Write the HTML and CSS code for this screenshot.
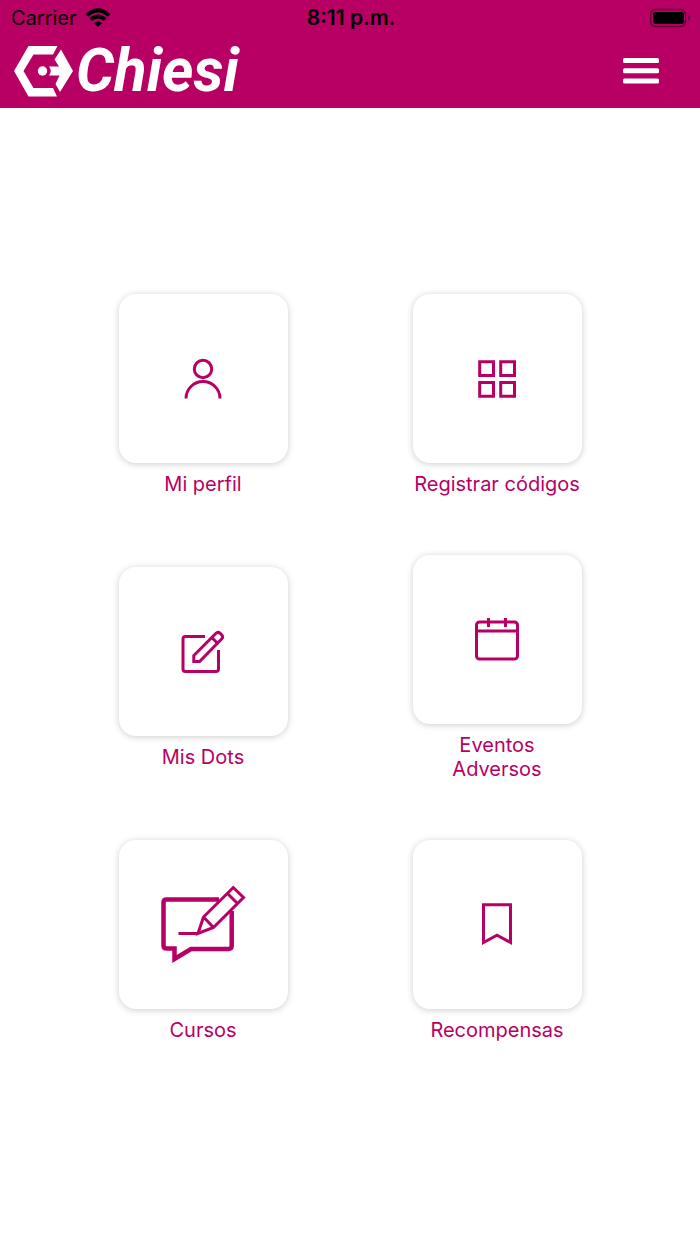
FILE: index.html
```html
<!DOCTYPE html>
<html lang="es">
<head>
<meta charset="utf-8">
<meta name="viewport" content="width=device-width, initial-scale=1">
<title>Chiesi</title>
<link rel="stylesheet" href="styles.css">
</head>
<body>
<header class="header">
  <div class="status">
    <div class="status-left">
      <span>Carrier</span>
      <svg width="26" height="20" viewBox="0 0 26 20" aria-hidden="true">
        <path d="M1.800 7.300Q13-2.700 24.200 7.300" fill="none" stroke="#000" stroke-width="4"/>
        <path d="M5.800 11.600Q13 5.200 20.200 11.600" fill="none" stroke="#000" stroke-width="3.800"/>
        <path d="M13 19L9 15.200Q13 11.800 17 15.200Z"/>
      </svg>
    </div>
    <time class="clock">8:11 p.m.</time>
    <div class="status-right">
      <svg width="42" height="20" viewBox="0 0 42 20" aria-hidden="true">
        <rect x="1.500" y="1.500" width="35" height="17" rx="5" fill="none" stroke="#000" stroke-opacity=".45" stroke-width="1.500"/>
        <rect x="4" y="4" width="31" height="12" rx="2.500"/>
        <path d="M39 7q2 1 2 3t-2 3z" opacity=".45"/>
      </svg>
    </div>
  </div>
  <nav class="nav">
    <a class="brand" href="#">
      <svg width="60" height="52" viewBox="14 45 60 52" fill="#fff" aria-hidden="true">
        <path d="M14 71L28.500 46H57.500L53 54.500H33.500L23.500 71L33.500 88H53L57 96.500H28.500Z"/>
        <path d="M61 49.500L73 71L60 92L55.500 84L59.500 75.500H49Q52.500 71 49 66.500H59L54.500 59.500Z"/>
        <circle cx="42.500" cy="71" r="4.700"/>
      </svg>
      <span>Chiesi</span>
    </a>
    <button class="menu" type="button" aria-label="Menú">
      <svg width="36" height="26" viewBox="0 0 36 26" fill="#fff" aria-hidden="true">
        <rect width="36" height="5" rx="1.500"/><rect y="10.300" width="36" height="5" rx="1.500"/><rect y="20.600" width="36" height="5" rx="1.500"/>
      </svg>
    </button>
  </nav>
</header>
<main class="tiles">
  <a class="tile" href="#">
    <span class="card"><svg width="48" height="48" viewBox="179 355 48 48"><circle cx="203" cy="369" r="8.700"/><path d="M186 398.500A17 17 0 0 1 220 398.500"/></svg></span>
    <span class="label">Mi perfil</span>
  </a>
  <a class="tile" href="#">
    <span class="card"><svg width="48" height="48" viewBox="473 355 48 48"><path d="M479.700 361.700h13.800v13.800h-13.800zM500.700 361.700h13.800v13.800h-13.800zM479.700 382.500h13.800v13.800h-13.800zM500.700 382.500h13.800v13.800h-13.800z"/></svg></span>
    <span class="label">Registrar códigos</span>
  </a>
  <a class="tile" href="#">
    <span class="card"><svg width="48" height="48" viewBox="179 628 48 48"><path d="M205 636.500H185.500Q183 636.500 183 639V669Q183 671.500 185.500 671.500H216Q218.500 671.500 218.500 669V650"/><path d="M193.800 661.500V655.500L216 633.300Q218 631.300 220.200 633.300L221.600 634.700Q223.600 636.900 221.600 639L199.600 661.500ZM211.800 637.500L217.500 643.200"/></svg></span>
    <span class="label">Mis Dots</span>
  </a>
  <a class="tile" href="#">
    <span class="card"><svg width="48" height="48" viewBox="473 616 48 48"><rect x="476.500" y="622" width="41" height="37" rx="3"/><path d="M476.500 631H517.500M488.500 618V627M505.500 618V627"/></svg></span>
    <span class="label">Eventos<br>Adversos</span>
  </a>
  <a class="tile" href="#">
    <span class="card"><svg width="88" height="80" viewBox="159 885 88 80"><path d="M219 899.500H166.500Q163.500 899.500 163.500 902.500V945.500Q163.500 948.500 166.500 948.500H174.500V959L191 949H228.500Q231.700 949 231.700 945.800V911" stroke-width="4.500"/><path d="M198 933.500L203.500 917L233.300 887.500L243.500 897.500L213.500 927.500ZM203.500 917L213.500 927.500M227.500 893.500L237.500 903.500M178.500 933.500H198"/></svg></span>
    <span class="label">Cursos</span>
  </a>
  <a class="tile" href="#">
    <span class="card"><svg width="48" height="48" viewBox="473 901 48 48"><path d="M483.500 904.700H510.500V942.500L497 935.300L483.500 942.500Z"/></svg></span>
    <span class="label">Recompensas</span>
  </a>
</main>
</body>
</html>
```
FILE: styles.css
```css
* { box-sizing: border-box; }

body {
  margin: 0;
  min-height: 100vh;
  display: flex;
  flex-direction: column;
  background: #fff;
  font-family: Inter, "Liberation Sans", sans-serif;
  font-size: 20px;
  line-height: 24px;
}

a { color: inherit; text-decoration: none; }
svg { display: block; }

.header { background: #b80064; }

.status {
  display: grid;
  grid-template-columns: 1fr auto 1fr;
  align-items: center;
  height: 36px;
  padding: 0 9px 0 11px;
  color: #000;
}

.status-left { display: flex; align-items: center; gap: 8px; }
.status-right { display: flex; justify-content: flex-end; }
.clock { font-size: 21px; font-weight: 600; }

.nav {
  display: flex;
  align-items: center;
  justify-content: space-between;
  height: 72px;
  padding: 0 36px 2px 14px;
}

.brand {
  display: flex;
  align-items: center;
  gap: 2px;
  color: #fff;
  font: italic bold 60px/52px Roboto, "Liberation Sans", sans-serif;
}

.menu {
  padding: 5px;
  border: 0;
  background: none;
  cursor: pointer;
}

.tiles {
  flex: 1;
  display: grid;
  grid-template-columns: 1fr 1fr;
  align-content: center;
  align-items: center;
  row-gap: 59px;
  padding: 0 8% 16px;
}

.tile {
  display: flex;
  flex-direction: column;
  align-items: center;
  gap: 9px;
  color: #b80064;
  text-align: center;
}

.card {
  display: grid;
  place-items: center;
  width: 169px;
  height: 169px;
  border-radius: 17px;
  background: #fff;
  box-shadow: 0 1px 7px rgba(0, 0, 0, 0.2);
}

.card svg {
  fill: none;
  stroke: #b80064;
  stroke-width: 3;
}
```
